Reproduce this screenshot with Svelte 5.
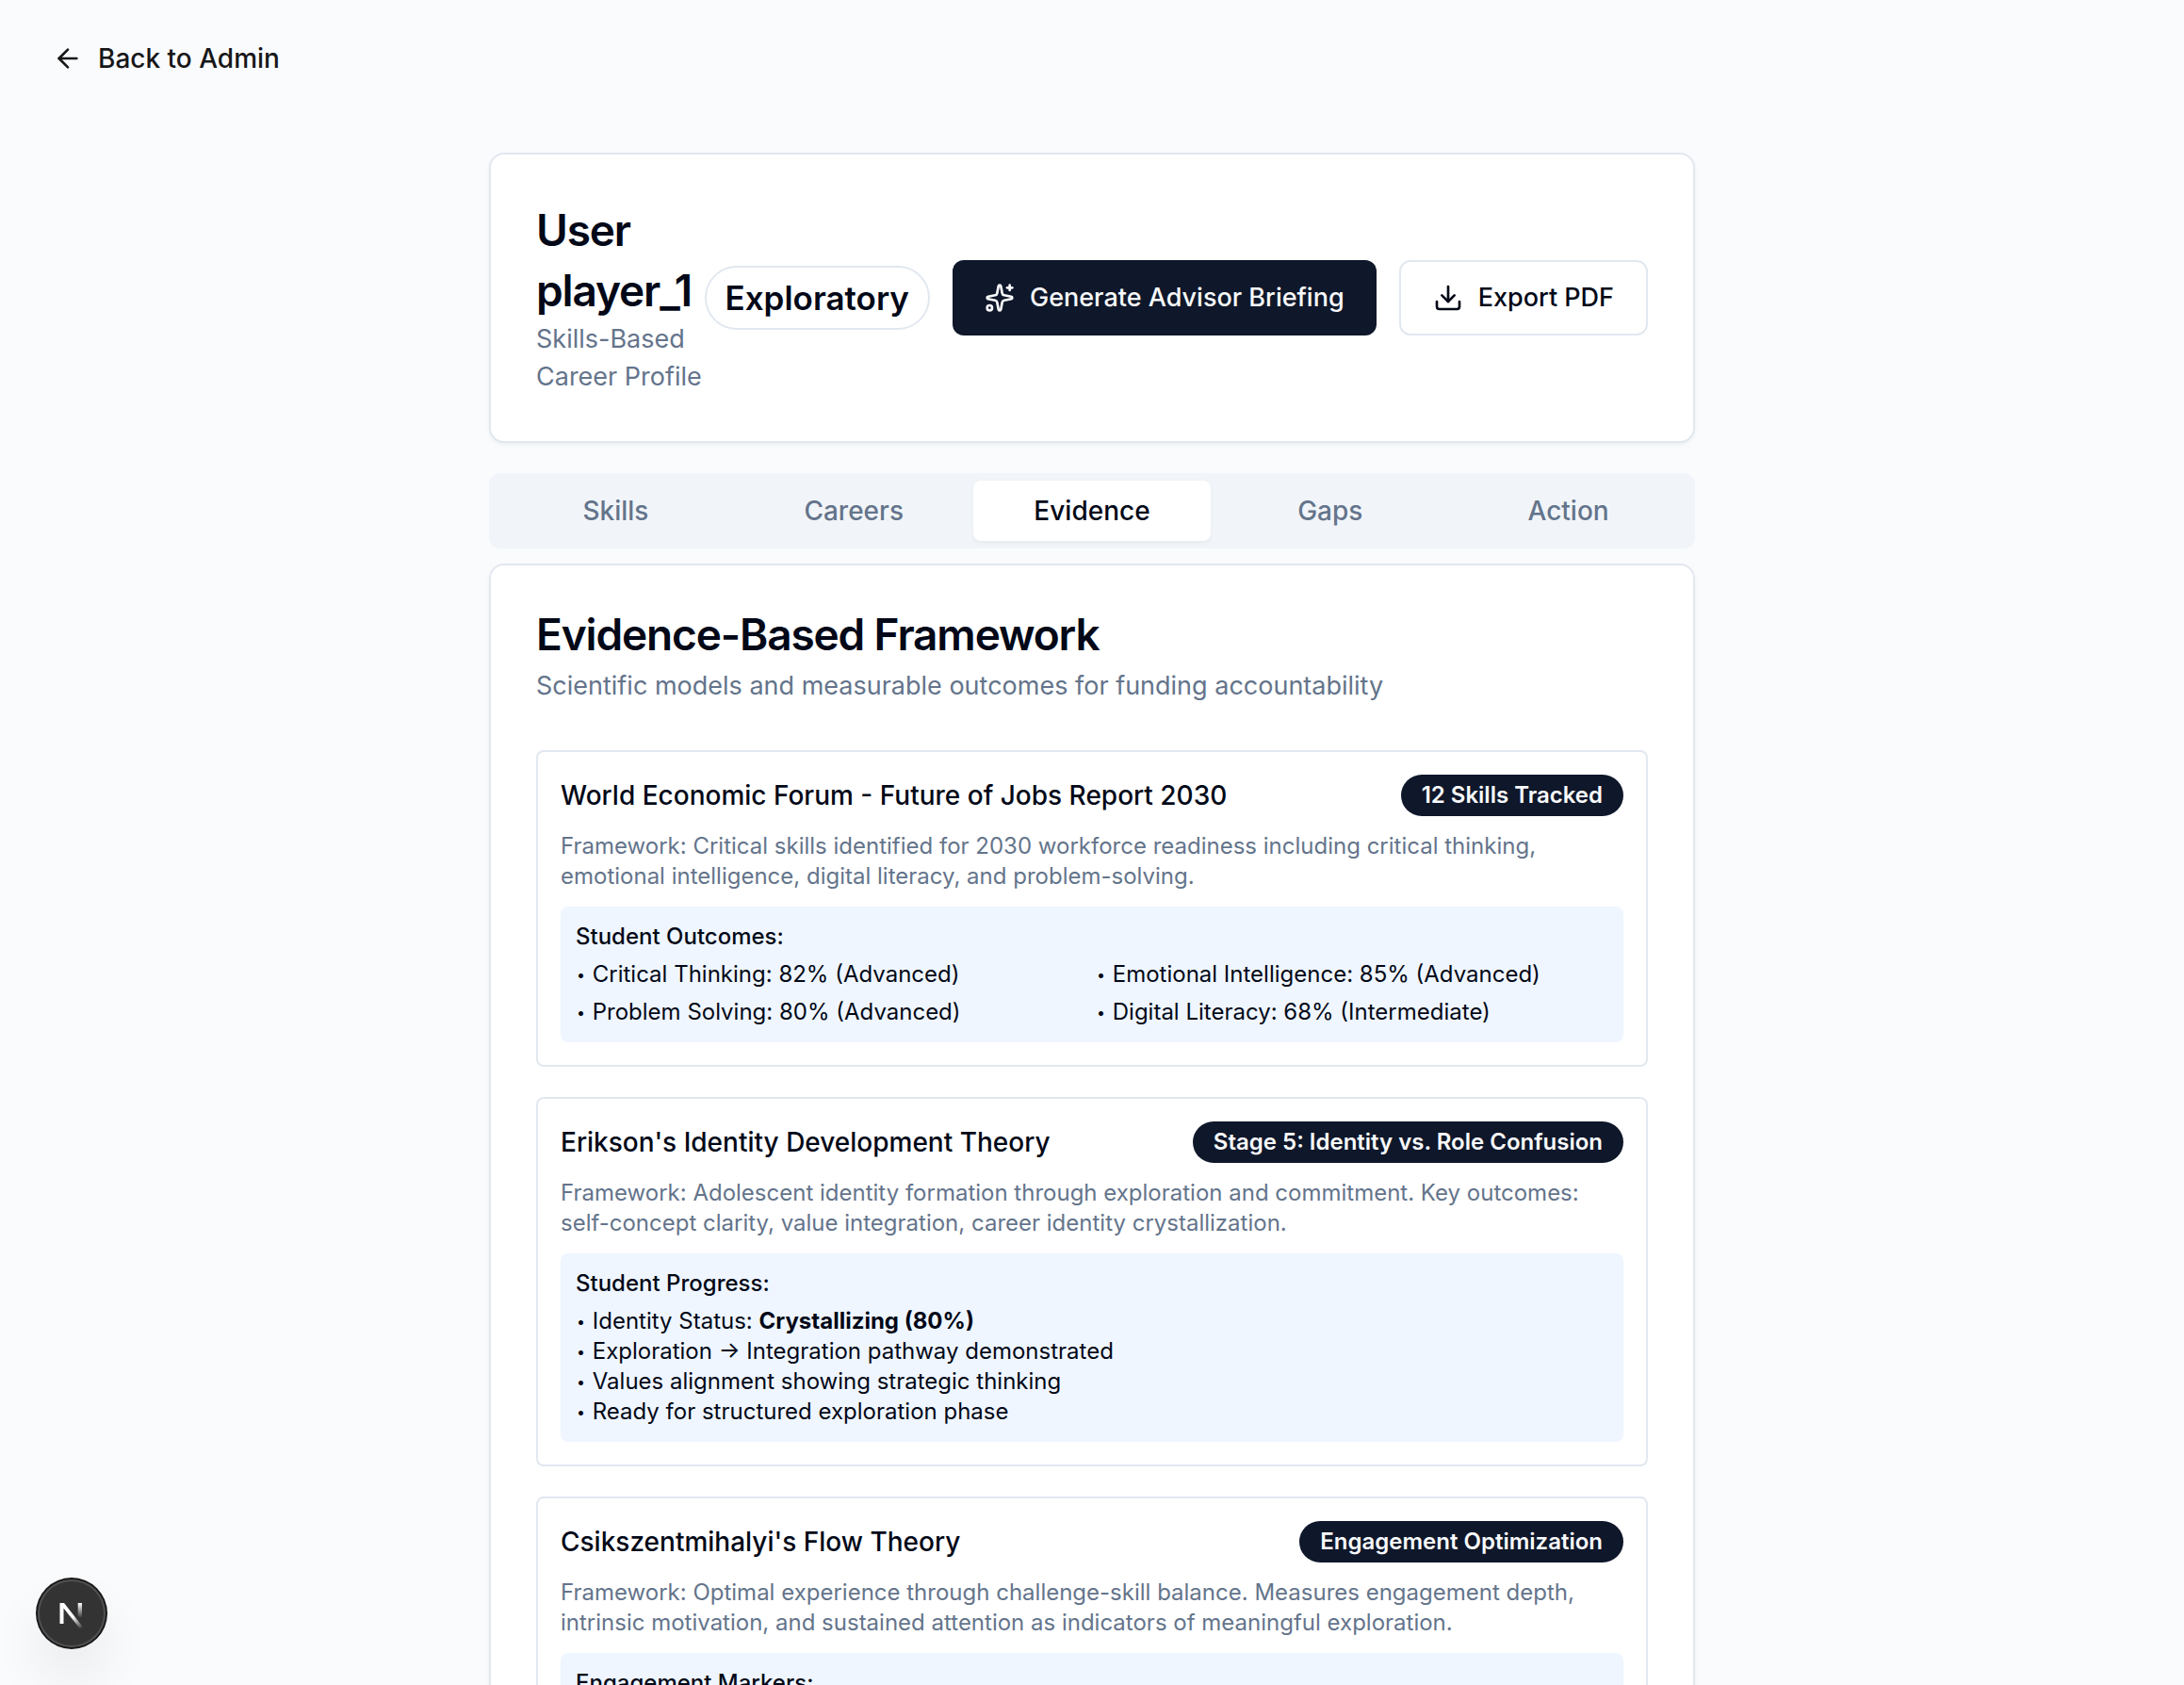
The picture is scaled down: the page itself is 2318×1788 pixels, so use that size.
<script>
  const tabs = ['Skills', 'Careers', 'Evidence', 'Gaps', 'Action'];
  let active = $state('Evidence');

  const frameworks = [
    {
      title: 'World Economic Forum - Future of Jobs Report 2030',
      badge: '12 Skills Tracked',
      text: 'Framework: Critical skills identified for 2030 workforce readiness including critical thinking, emotional intelligence, digital literacy, and problem-solving.',
      label: 'Student Outcomes:',
      columns: true,
      items: [
        { text: 'Critical Thinking: 82% (Advanced)' },
        { text: 'Emotional Intelligence: 85% (Advanced)' },
        { text: 'Problem Solving: 80% (Advanced)' },
        { text: 'Digital Literacy: 68% (Intermediate)' }
      ]
    },
    {
      title: "Erikson's Identity Development Theory",
      badge: 'Stage 5: Identity vs. Role Confusion',
      text: 'Framework: Adolescent identity formation through exploration and commitment. Key outcomes: self-concept clarity, value integration, career identity crystallization.',
      label: 'Student Progress:',
      columns: false,
      items: [
        { text: 'Identity Status: ', strong: 'Crystallizing (80%)' },
        { text: 'Exploration → Integration pathway demonstrated' },
        { text: 'Values alignment showing strategic thinking' },
        { text: 'Ready for structured exploration phase' }
      ]
    },
    {
      title: "Csikszentmihalyi's Flow Theory",
      badge: 'Engagement Optimization',
      text: 'Framework: Optimal experience through challenge-skill balance. Measures engagement depth, intrinsic motivation, and sustained attention as indicators of meaningful exploration.',
      label: 'Engagement Markers:',
      columns: false,
      items: []
    }
  ];
</script>

<div class="page">
  <nav class="topbar">
    <a class="back" href="#admin">
      <svg class="icon" viewBox="0 0 24 24" aria-hidden="true">
        <path d="m12 19-7-7 7-7" />
        <path d="M19 12H5" />
      </svg>
      Back to Admin
    </a>
  </nav>

  <main class="container">
    <section class="card profile">
      <div class="identity">
        <h1 class="title name">User player_1</h1>
        <p class="subtitle">Skills-Based Career Profile</p>
      </div>
      <div class="actions">
        <span class="stage">Exploratory</span>
        <button class="btn primary" type="button">
          <svg class="icon" viewBox="0 0 24 24" aria-hidden="true">
            <path d="M11.017 2.814a1 1 0 0 1 1.966 0l1.051 5.558a2 2 0 0 0 1.594 1.594l5.558 1.051a1 1 0 0 1 0 1.966l-5.558 1.051a2 2 0 0 0-1.594 1.594l-1.051 5.558a1 1 0 0 1-1.966 0l-1.051-5.558a2 2 0 0 0-1.594-1.594l-5.558-1.051a1 1 0 0 1 0-1.966l5.558-1.051a2 2 0 0 0 1.594-1.594z" />
            <path d="M20 2v4" />
            <path d="M22 4h-4" />
            <circle cx="4" cy="20" r="2" />
          </svg>
          Generate Advisor Briefing
        </button>
        <button class="btn outline" type="button">
          <svg class="icon" viewBox="0 0 24 24" aria-hidden="true">
            <path d="M12 15V3" />
            <path d="M21 15v4a2 2 0 0 1-2 2H5a2 2 0 0 1-2-2v-4" />
            <path d="m7 10 5 5 5-5" />
          </svg>
          Export PDF
        </button>
      </div>
    </section>

    <div class="tabs" role="tablist">
      {#each tabs as tab}
        <button
          class="tab"
          class:active={tab === active}
          type="button"
          role="tab"
          aria-selected={tab === active}
          onclick={() => (active = tab)}>{tab}</button>
      {/each}
    </div>

    <section class="card evidence">
      <header class="card-head">
        <h2 class="title">Evidence-Based Framework</h2>
        <p class="subtitle">Scientific models and measurable outcomes for funding accountability</p>
      </header>

      {#each frameworks as f}
        <article class="framework">
          <div class="framework-head">
            <h3>{f.title}</h3>
            <span class="badge">{f.badge}</span>
          </div>
          <p class="muted">{f.text}</p>
          <div class="outcomes">
            <p class="label">{f.label}</p>
            <ul class:columns={f.columns}>
              {#each f.items as item}
                <li><span class="dot">•</span> {item.text}{#if item.strong}<strong>{item.strong}</strong>{/if}</li>
              {/each}
            </ul>
          </div>
        </article>
      {/each}
    </section>
  </main>

  <button class="devtools" type="button" aria-label="Open developer tools">
    <svg viewBox="0 0 40 40" fill="none" aria-hidden="true">
      <defs>
        <linearGradient id="stem" x1="0" y1="9" x2="0" y2="25" gradientUnits="userSpaceOnUse">
          <stop stop-color="#fff" />
          <stop offset="1" stop-color="#fff" stop-opacity="0" />
        </linearGradient>
        <linearGradient id="slash" x1="22" y1="23" x2="31" y2="36" gradientUnits="userSpaceOnUse">
          <stop stop-color="#fff" />
          <stop offset="1" stop-color="#fff" stop-opacity="0" />
        </linearGradient>
      </defs>
      <path d="M7.500 31V9h4.500L32 34.500l-3 2L11.500 14.500V31z" fill="url(#slash)" />
      <path d="M26.700 9H31v19l-4.300-5z" fill="url(#stem)" />
    </svg>
  </button>
</div>

<style>
  :global(html) {
    scrollbar-width: none;
  }

  :global(body) {
    margin: 0;
    background: #f9fbfd;
  }

  .page {
    font-family: Inter, 'Liberation Sans', sans-serif;
    font-size: 28px;
    line-height: 40px;
    color: #020817;
    -webkit-font-smoothing: antialiased;
  }

  h1,
  h2,
  h3,
  p,
  ul {
    margin: 0;
    padding: 0;
  }

  button {
    font: inherit;
    color: inherit;
    border: 0;
    cursor: pointer;
  }

  .icon {
    width: 32px;
    height: 32px;
    flex: none;
    fill: none;
    stroke: currentColor;
    stroke-width: 2;
    stroke-linecap: round;
    stroke-linejoin: round;
  }

  .topbar {
    display: flex;
    padding: 42px 56px 80px;
  }

  .back {
    display: flex;
    align-items: center;
    gap: 16px;
    color: #171717;
    font-weight: 500;
    text-decoration: none;
  }

  .container {
    max-width: 1280px;
    margin: 0 auto;
    padding: 0 32px 48px;
  }

  .card {
    border: 2px solid #e2e8f0;
    border-radius: 16px;
    background: #fff;
    padding: 48px;
    box-shadow: 0 2px 4px rgb(0 0 0 / 5%);
  }

  .profile {
    display: flex;
    align-items: center;
    justify-content: space-between;
  }

  .identity {
    flex: 1 1 0;
    min-width: 0;
  }

  .title {
    font-size: 46px;
    line-height: 50px;
    font-weight: 600;
    letter-spacing: -0.025em;
  }

  .name {
    line-height: 64px;
  }

  .subtitle {
    color: #64748b;
    font-size: 27px;
  }

  .actions {
    display: flex;
    align-items: center;
    gap: 24px;
    flex: none;
  }

  .stage {
    border: 2px solid #e2e8f0;
    border-radius: 34px;
    padding: 4px 20px;
    font-size: 35px;
    line-height: 56px;
    font-weight: 600;
  }

  .btn {
    display: flex;
    align-items: center;
    gap: 16px;
    height: 80px;
    padding: 0 34px;
    border-radius: 12px;
    font-size: 27px;
    font-weight: 500;
    white-space: nowrap;
  }

  .primary {
    background: #0f172a;
    color: #f8fafc;
  }

  .outline {
    border: 2px solid #e2e8f0;
    background: #fff;
  }

  .tabs {
    display: grid;
    grid-template-columns: repeat(5, 1fr);
    margin: 32px 0 16px;
    padding: 8px;
    border-radius: 12px;
    background: #f1f5f9;
  }

  .tab {
    padding: 12px 24px;
    border-radius: 8px;
    background: transparent;
    color: #64748b;
    font-weight: 500;
  }

  .tab.active {
    background: #fff;
    color: #020817;
    box-shadow: 0 2px 4px rgb(0 0 0 / 5%);
  }

  .evidence {
    display: grid;
    gap: 32px;
  }

  .card-head {
    display: grid;
    gap: 10px;
    padding-bottom: 16px;
  }

  .framework {
    display: grid;
    gap: 16px;
    border: 2px solid #e2e8f0;
    border-radius: 8px;
    padding: 24px;
    font-size: 24px;
    line-height: 32px;
  }

  .framework-head {
    display: flex;
    align-items: center;
    justify-content: space-between;
    gap: 16px;
  }

  h3 {
    font-size: 28px;
    line-height: 40px;
    font-weight: 500;
  }

  .badge {
    border-radius: 22px;
    padding: 6px 22px;
    background: #0f172a;
    color: #f8fafc;
    font-weight: 600;
    white-space: nowrap;
  }

  .muted {
    color: #64748b;
  }

  .outcomes {
    display: grid;
    gap: 8px;
    border-radius: 8px;
    padding: 16px;
    background: #eff6ff;
  }

  .label {
    font-weight: 500;
  }

  ul {
    list-style: none;
  }

  .columns {
    display: grid;
    grid-template-columns: 1fr 1fr;
    gap: 8px;
  }

  .dot {
    display: inline-block;
    width: 11px;
    font-size: 16px;
    line-height: 20px;
    text-align: center;
    vertical-align: 2px;
  }

  strong {
    font-weight: 700;
  }

  .devtools {
    position: fixed;
    left: 40px;
    bottom: 40px;
    display: grid;
    place-items: center;
    width: 72px;
    height: 72px;
    padding: 0;
    border-radius: 50%;
    background: #333;
    box-shadow:
      0 0 0 2px #171717,
      inset 0 0 0 2px #505050,
      0 32px 64px -16px rgb(0 0 0 / 24%);
  }

  .devtools svg {
    width: 40px;
    height: 40px;
  }
</style>
